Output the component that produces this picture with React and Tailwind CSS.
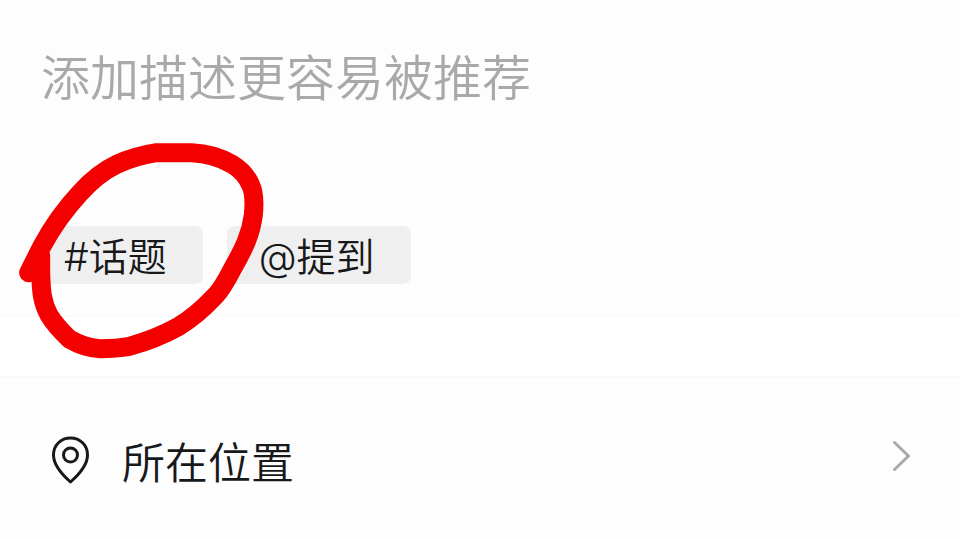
import { useState } from 'react';

const tags = [
  { id: 'topic', label: '#话题', spacing: 'pl-6 pr-9' },
  { id: 'mention', label: '@提到', spacing: 'pl-8 pr-9' },
];

const PinIcon = () => (
  <svg viewBox="0 0 40 50" className="w-10 h-[50px] shrink-0" fill="none" stroke="#17181a" strokeWidth="3" aria-hidden="true">
    <path d="M20.500 47C12 39.500 3.500 29 3.500 20C3.500 10 11 3 20.500 3S37.500 10 37.500 20C37.500 29 29 39.500 20.500 47Z" strokeLinejoin="round" />
    <circle cx="20.500" cy="20" r="7" />
  </svg>
);

const ChevronIcon = () => (
  <svg viewBox="0 0 20 34" className="w-5 h-[34px] shrink-0" fill="none" stroke="#a9a9a9" strokeWidth="3" aria-hidden="true">
    <path d="M2.500 3.500L16.500 17L2.500 30.500" strokeLinecap="round" strokeLinejoin="round" />
  </svg>
);

// Hand drawn circle around the topic button
const Marker = () => (
  <svg
    viewBox="0 0 840 720"
    className="absolute -left-10 -top-24 w-[280px] h-[240px] max-w-none pointer-events-none"
    fill="none"
    stroke="#f40000"
    strokeWidth="57"
    strokeLinecap="round"
    strokeLinejoin="round"
    aria-hidden="true"
  >
    <path d="M86 428L125 350C160 285 200 232 240 189C275 150 310 122 350 103C390 85 430 74 470 68H575C625 70 665 84 697 103C725 120 742 142 752 165C764 190 763 225 760 255C753 310 733 355 697 417C675 460 655 490 640 503C610 535 575 565 535 590C490 615 440 635 388 649C360 654 335 656 300 656C268 654 235 643 208 627C185 605 160 577 147 555C125 515 124 480 122 430V375" />
  </svg>
);

const App = () => {
  const [description, setDescription] = useState('');

  return (
    <main
      lang="zh-CN"
      className="min-h-screen flex flex-col bg-[#fdfdfd] font-['Noto_Sans_CJK_SC',sans-serif] font-[350] text-[#17181a]"
    >
      <section className="pt-9 pb-8 border-b border-[#f8f8f8]">
        <div className="px-[41px]">
          <textarea
            aria-label="添加描述"
            rows={1}
            placeholder="添加描述更容易被推荐"
            value={description}
            onChange={(e) => setDescription(e.target.value)}
            className="block w-full h-[190px] resize-none outline-none text-[49px] leading-[78px] placeholder:text-[#a9a9a9]"
          />
        </div>
        <div className="relative flex gap-6 ml-10">
          {tags.map((tag) => (
            <button
              key={tag.id}
              type="button"
              className={`h-[58px] pt-1 ${tag.spacing} rounded-lg bg-[#efefef] font-['Inter','Noto_Sans_CJK_SC',sans-serif] text-[39px] leading-[54px] whitespace-nowrap`}
            >
              {tag.label}
            </button>
          ))}
          <Marker />
        </div>
      </section>

      <div className="h-[60px] bg-white border-b border-[#f8f8f8]" />

      <button type="button" className="flex items-start w-full pt-11 pb-8 pl-[50px] pr-12 text-left">
        <span className="flex flex-1 items-center gap-8 text-[43px] leading-[78px]">
          <PinIcon />
          所在位置
        </span>
        <span className="flex pt-[18px]">
          <ChevronIcon />
        </span>
      </button>
    </main>
  );
};

export default App;
